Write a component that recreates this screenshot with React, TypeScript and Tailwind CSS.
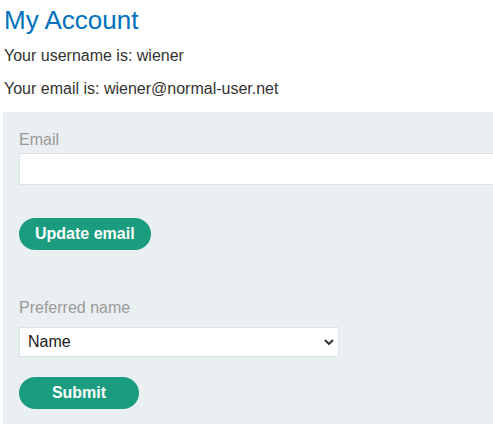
import { useState } from "react";

export default function App() {
  const [email, setEmail] = useState("");
  const [name, setName] = useState("name");

  return (
    <div className="w-[493px] h-[426px] overflow-hidden bg-white font-['Liberation_Sans',Arial,sans-serif] text-[#333332]">
      <div className="pl-1 pt-[5px]">
        <h1 className="text-[26px] leading-[30px] text-[#0071bc]">My Account</h1>
        <p className="mt-[9px] text-base leading-6">Your username is: wiener</p>
        <p className="mt-[9px] text-base leading-6">Your email is: wiener@normal-user.net</p>
      </div>

      {/* account form panel, runs off the right edge */}
      <div className="mt-[11px] ml-[3px] w-[640px] bg-[#eaeff2] pl-4 pt-[19px] pb-[15px]">
        <form onSubmit={(e) => e.preventDefault()}>
          <label className="block text-base leading-[18px] text-[#999999]">Email</label>
          <input
            type="email"
            value={email}
            onChange={(e) => setEmail(e.target.value)}
            className="mt-1 block h-8 w-[620px] border border-[#dfe3e6] bg-white px-2 text-base outline-none"
          />
          <button className="mt-[33px] h-8 rounded-full bg-[#1a9c7f] px-4 text-base font-bold leading-8 text-white">
            Update email
          </button>
        </form>

        <form onSubmit={(e) => e.preventDefault()} className="mt-[49px]">
          <label className="block text-base leading-[18px] text-[#999999]">Preferred name</label>
          <div className="relative mt-[10px] w-80">
            <select
              value={name}
              onChange={(e) => setName(e.target.value)}
              className="block h-[30px] w-80 appearance-none border border-[#dfe3e6] bg-white pl-2 text-base text-[#1a1a1a] outline-none"
            >
              <option value="name">Name</option>
              <option value="nickname">Nickname</option>
            </select>
            <svg
              className="pointer-events-none absolute right-[5px] top-[12px]"
              width="10"
              height="6"
              viewBox="0 0 10 6"
              fill="none"
              stroke="#333"
              strokeWidth="2"
            >
              <path d="M1 1l4 4 4-4" />
            </svg>
          </div>
          <button className="mt-5 h-8 w-[120px] rounded-full bg-[#1a9c7f] text-base font-bold leading-8 text-white">
            Submit
          </button>
        </form>
      </div>
    </div>
  );
}
